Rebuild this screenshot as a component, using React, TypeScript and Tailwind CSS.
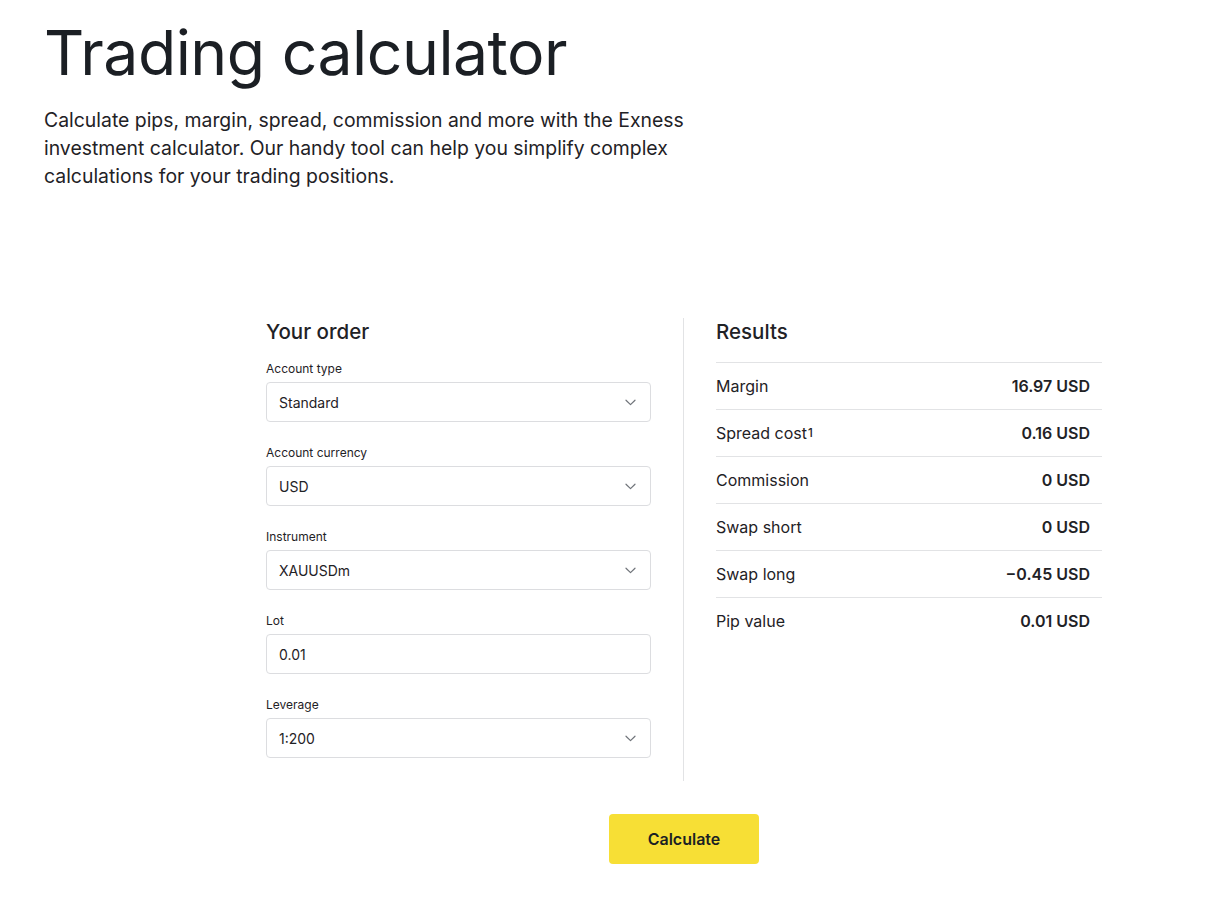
import React from "react";

const Chevron = () => (
  <svg width="11" height="7" viewBox="0 0 11 7" fill="none" className="shrink-0">
    <path d="M1 1.2 L5.5 5.6 L10 1.2" stroke="#70747a" strokeWidth="1.2" strokeLinecap="round" strokeLinejoin="round" />
  </svg>
);

const Field = ({ label, value, select = true }: { label: string; value: string; select?: boolean }) => (
  <div className="flex flex-col">
    <div className="text-[12px] leading-[16px] text-[#1f2226] mb-[5px]">{label}</div>
    <div className="h-[40px] border border-[#dcdde0] rounded-[4px] flex items-center justify-between pl-[12px] pr-[14px] text-[14px] text-[#1f2226]">
      <span>{value}</span>
      {select && <Chevron />}
    </div>
  </div>
);

const rows: [string, string, boolean?][] = [
  ["Margin", "16.97 USD"],
  ["Spread cost", "0.16 USD", true],
  ["Commission", "0 USD"],
  ["Swap short", "0 USD"],
  ["Swap long", "\u22120.45 USD"],
  ["Pip value", "0.01 USD"],
];

export default function App() {
  return (
    <div className="min-h-[912px] bg-white text-[#1f2226]" style={{ fontFamily: "Inter, 'Noto Sans', sans-serif" }}>
      <div className="pl-[44px] pt-[16px]">
        <h1 className="text-[62.5px] leading-[72px] font-normal tracking-[-0.5px] text-[#1b1f24]">Trading calculator</h1>
        <p className="mt-[18px] w-[660px] text-[19.4px] leading-[28px] text-[#1f2226]">
          Calculate pips, margin, spread, commission and more with the Exness investment calculator. Our handy tool can help you simplify complex calculations for your trading positions.
        </p>
      </div>

      <div className="ml-[266px] w-[836px] mt-[128px]">
        <div className="flex">
          <div className="w-[385px] flex flex-col">
            <h2 className="text-[20.5px] leading-[28px] font-medium mb-[15px]">Your order</h2>
            <div className="flex flex-col gap-[23px]">
              <Field label="Account type" value="Standard" />
              <Field label="Account currency" value="USD" />
              <Field label="Instrument" value="XAUUSDm" />
              <Field label="Lot" value="0.01" select={false} />
              <Field label="Leverage" value="1:200" />
            </div>
          </div>
          <div className="mx-[32px] w-px bg-[#e2e3e5] h-[463px]" />
          <div className="w-[386px] flex flex-col">
            <h2 className="text-[20.5px] leading-[28px] font-medium mb-[16px]">Results</h2>
            <div className="flex flex-col">
              {rows.map(([l, v, sup]) => (
                <div
                  key={l}
                  className="h-[47px] flex items-center justify-between pr-[12px] text-[16px] leading-[22px] pb-[1px] border-t border-[#e2e3e5]"
                >
                  <span>
                    {l}
                    {sup && <sup className="text-[11.5px] font-medium ml-[1px] relative -top-[2px]">1</sup>}
                  </span>
                  <span className="font-semibold">{v}</span>
                </div>
              ))}
            </div>
          </div>
        </div>
        <div className="flex justify-center mt-[33px]">
          <button className="w-[150px] h-[50px] rounded-[4px] bg-[#f7df35] text-[16px] font-semibold text-[#1b1f24]">Calculate</button>
        </div>
      </div>
    </div>
  );
}
